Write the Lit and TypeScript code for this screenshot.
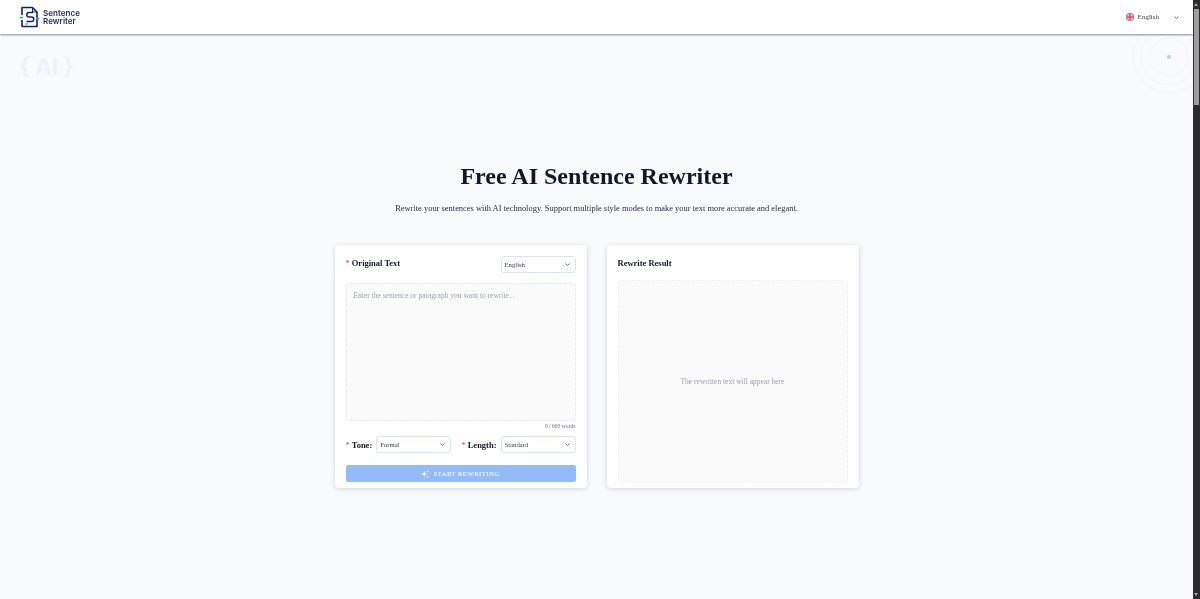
import { LitElement, html, css, svg } from "lit";
import { customElement } from "lit/decorators.js";

const chevron = svg`<svg class="chev" viewBox="0 0 10 6" width="5" height="3" fill="none" stroke="#4b5563" stroke-width="1.6"><path d="M1 1l4 4 4-4"/></svg>`;

@customElement("app-root")
export class AppRoot extends LitElement {
  static styles = css`
    :host { display: flex; height: 100vh; overflow: hidden; font-family: "Liberation Serif", serif; color: #111827; background: #f9fafb; }
    * { box-sizing: border-box; }
    .page { flex: 1; min-width: 0; display: flex; flex-direction: column; position: relative; overflow: hidden; background: #f8fafc; }
    .rail { width: 7px; background: #2b2b2b; position: relative; }
    .thumb { position: absolute; left: 1px; right: 1px; top: 9px; height: 96px; background: #9e9e9e; }
    .arrow { position: absolute; left: 1px; top: 3px; width: 0; height: 0; border-left: 2.5px solid transparent; border-right: 2.5px solid transparent; border-bottom: 3px solid #a8a8a8; }
    .arrow.down { top: auto; bottom: 3px; border-bottom: 0; border-top: 3px solid #a8a8a8; }
    header { height: 34px; flex: none; background: #fff; display: flex; align-items: center; justify-content: space-between; padding: 0 14px 0 19px; box-shadow: 0 1px 2px rgba(0,0,0,.45); position: relative; z-index: 2; }
    .brand { display: flex; align-items: center; gap: 3px; }
    .brand-text { font-family: "Inter", "Liberation Sans", sans-serif; font-weight: 600; font-size: 8px; letter-spacing: .05px; line-height: 8px; color: #1e2a5a; }
    .lang { display: flex; align-items: center; font-size: 7px; color: #374151; }
    .lang svg.flag { margin-right: 4px; }
    .lang .chev { margin-left: 15px; }
    .deco-ai { position: absolute; left: 19px; top: 54px; font-family: "Inter", "Liberation Sans", sans-serif; font-weight: 700; font-size: 22.5px; line-height: 26px; color: #eef3fb; }
    .deco-circles { position: absolute; right: -14px; top: 21px; }
    main { flex: 1; display: flex; flex-direction: column; align-items: center; padding-top: 126px; will-change: transform; }
    h1 { margin: 0; font-size: 24px; line-height: 32px; font-weight: 700; color: #111827; }
    .sub { margin: 9px 0 0; font-size: 8.45px; line-height: 14px; color: #1f2937; }
    .cards { display: flex; gap: 20px; margin-top: 30px; }
    .card { width: 252px; height: 243px; background: #fff; border-radius: 4px; box-shadow: 0 1px 5px rgba(15,23,42,.16); padding: 11px 11px 5px; display: flex; flex-direction: column; }
    .card > * { flex: none; }
    .row { display: flex; align-items: flex-start; justify-content: space-between; }
    .title { font-size: 8.5px; line-height: 14px; font-weight: 700; color: #111827; }
    .req { color: #ef4444; font-weight: 400; margin-right: 2px; }
    .select { width: 75px; height: 17px; border: 1px solid #d6e5fb; border-radius: 3px; background: #fff; display: flex; align-items: center; justify-content: space-between; padding: 0 5px 0 3px; font-size: 6.7px; color: #374151; }
    .area { margin-top: 10px; height: 138px; background: #fafafa; border: 1px dashed #e8e9eb; border-radius: 3px; padding: 7px 7px; font-size: 7.5px; color: #9ca3af; }
    .count { font-size: 5.6px; line-height: 9px; margin-top: 1px; text-align: right; color: #6b7280; }
    .opts { display: flex; align-items: center; margin-top: 5px; }
    .opt { display: flex; align-items: center; gap: 4px; }
    .opt + .opt { margin-left: auto; }
    .opts .label { font-size: 8.5px; font-weight: 700; }
    .btn { margin-top: 12px; height: 17px; background: #93bbf8; border-radius: 2px; display: flex; align-items: center; justify-content: center; gap: 4px; color: #fff; font-size: 6.7px; letter-spacing: .45px; }
    .head { height: 14px; display: flex; align-items: center; }
    .card > .result { flex: 1; margin-top: 10px; background: #fafafa; border: 1px dashed #f0f1f2; border-radius: 4px; display: flex; align-items: center; justify-content: center; font-size: 7.5px; color: #9ca3af; }
  `;

  render() {
    return html`
      <div class="page">
        <header>
          <div class="brand">
            <svg width="21" height="22" viewBox="0 0 21 22" fill="none">
              <path d="M3 9V1.500h10.500L18 6V20.500H3V14" stroke="#14246b" stroke-width="1.600" stroke-linejoin="round"/>
              <path d="M13.500 1.500V6H18" stroke="#14246b" stroke-width="1"/>
              <path d="M14 6.500H10a2.200 2.200 0 0 0 0 4.500h2.500a2.200 2.200 0 0 1 0 4.500H7.500" stroke="#14246b" stroke-width="1.500"/>
              <path d="M0.500 11.500h3.500M17 12.500h3.500" stroke="#22a7f0" stroke-width="1.600"/>
              <path d="M6 18h3" stroke="#22a7f0" stroke-width="1.100"/>
            </svg>
            <div class="brand-text">Sentence<br />Rewriter</div>
          </div>
          <div class="lang">
            <svg class="flag" width="8" height="8" viewBox="0 0 16 16">
              <defs><clipPath id="c"><circle cx="8" cy="8" r="8"/></clipPath></defs>
              <g clip-path="url(#c)">
                <rect width="16" height="16" fill="#34488f"/>
                <path d="M0 0l16 16M16 0L0 16" stroke="#fff" stroke-width="3"/>
                <path d="M0 0l16 16M16 0L0 16" stroke="#e2404c" stroke-width="1.200"/>
                <path d="M8 0v16M0 8h16" stroke="#fff" stroke-width="5"/>
                <path d="M8 0v16M0 8h16" stroke="#e2404c" stroke-width="3"/>
              </g>
            </svg>
            English
            ${chevron}
          </div>
        </header>
        <div class="deco-ai">{ AI }</div>
        <svg class="deco-circles" width="76" height="76" viewBox="0 0 76 76" fill="none">
          <circle cx="38" cy="36" r="19" stroke="#f3f6fb"/>
          <circle cx="38" cy="36" r="28" stroke="#f4f6fb"/>
          <circle cx="38" cy="36" r="36" stroke="#f5f7fb" stroke-width="2"/>
          <circle cx="38" cy="36" r="2" fill="#b5cffb"/>
        </svg>
        <main>
          <h1>Free AI Sentence Rewriter</h1>
          <p class="sub">Rewrite your sentences with AI technology. Support multiple style modes to make your text more accurate and elegant.</p>
          <div class="cards">
            <section class="card">
              <div class="row">
                <div class="title"><span class="req">*</span>Original Text</div>
                <div class="select">English ${chevron}</div>
              </div>
              <div class="area">Enter the sentence or paragraph you want to rewrite...</div>
              <div class="count">0 / 600 words</div>
              <div class="opts">
                <div class="opt"><span class="label"><span class="req">*</span>Tone:</span><div class="select">Formal ${chevron}</div></div>
                <div class="opt"><span class="label"><span class="req">*</span>Length:</span><div class="select">Standard ${chevron}</div></div>
              </div>
              <div class="btn">
                <svg width="8" height="8" viewBox="0 0 12 12" fill="#fff"><path d="M5 1.500l1.100 3.400L9.500 6 6.100 7.100 5 10.500 3.900 7.100.5 6l3.400-1.100z"/><path d="M10 .2l.5 1.300 1.300.5-1.300.5-.5 1.300-.5-1.300-1.300-.5 1.300-.5zM10 8.200l.5 1.300 1.300.5-1.300.5-.5 1.300-.5-1.300-1.300-.5 1.300-.5z"/></svg>
                START REWRITING
              </div>
            </section>
            <section class="card">
              <div class="head"><div class="title">Rewrite Result</div></div>
              <div class="result">The rewritten text will appear here</div>
            </section>
          </div>
        </main>
      </div>
      <div class="rail"><div class="arrow"></div><div class="thumb"></div><div class="arrow down"></div></div>
    `;
  }
}
